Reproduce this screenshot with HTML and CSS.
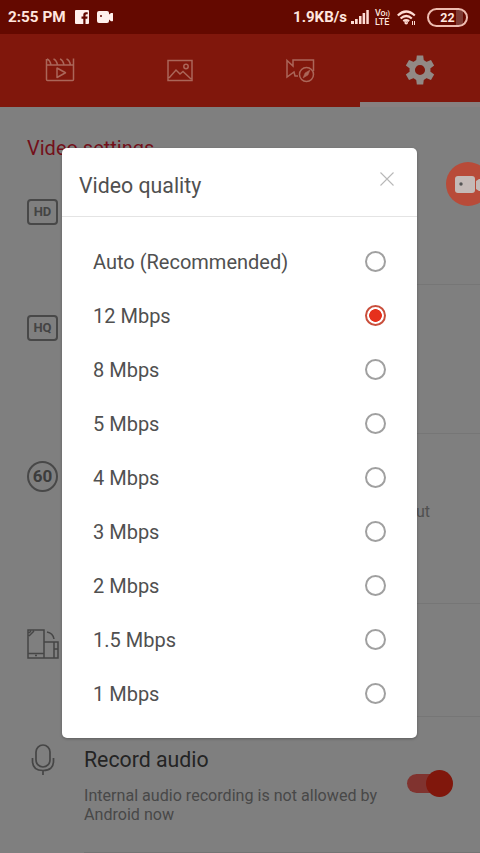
FILE: index.html
```html
<!DOCTYPE html>
<html lang="en">
<head>
<meta charset="utf-8">
<title>Video settings</title>
<link rel="stylesheet" href="styles.css">
</head>
<body>
<div class="screen">
  <header class="status">
    <span class="clock">2:55 PM</span>
    <svg class="fb" width="14" height="14" viewBox="0 0 14 14"><path fill="#fff0ec" fill-rule="evenodd" d="M1 0h12a1 1 0 0 1 1 1v12a1 1 0 0 1-1 1h-2.500V8.700h1.800l.3-2.100h-2.100V5.200q0-1 1.100-1h1.100V2.300h-1.800Q8.300 2.300 8.300 4.800v1.800H6.500v2.100h1.800V14H1a1 1 0 0 1-1-1V1a1 1 0 0 1 1-1z"/></svg>
    <svg class="cam" width="17" height="12" viewBox="0 0 17 12"><rect width="12" height="12" rx="2" fill="#fff0ec"/><path fill="#fff0ec" d="M12 3.500l2-1.500h1.500q.5 0 .5.600v7q0 .600-.5.600H14L12 8.500z"/><circle cx="4" cy="5" r="1" fill="#640900"/></svg>
    <span class="speed">1.9KB/s</span>
    <svg class="signal" width="18" height="14" viewBox="0 0 18 14" fill="#ffdcd4"><path d="M0 11h3v3H0zM4 9h2.700v5H4zM8 6h2.500v8H8zM11.600 3h2.500v11h-2.500zM15.300 0h2.500v14h-2.500z"/></svg>
    <span class="volte"><span>Vo<small>ı)</small></span><span>LTE</span></span>
    <svg class="wifi" width="19" height="15" viewBox="0 0 19 15" fill="none" stroke="#ffdcd4" stroke-width="2.200"><path d="M.8 5.500Q9 -2.500 17.800 5.500M3.600 8.500q5.600-5 11.200 0M6.300 11.200q2.900-2.300 5.800 0"/><circle cx="9.200" cy="12.700" r=".7"/><path stroke-width="1" d="M15.500 11v4M17.500 11v4"/></svg>
    <span class="battery"><b>22</b></span>
  </header>
  <nav class="tabs">
    <div class="tab"><svg width="30" height="26" viewBox="0 0 30 26" fill="none" stroke="#ab6659" stroke-width="1.500"><path d="M1.500 2v20.500q0 1 1 1h25q1 0 1-1V1.500M1.500 8h27M2 2q3 1 4 6M8.500 2q3 1 4 6M15 2q3 1 4 6M21.500 2q3 1 4 6"/><path stroke-linejoin="round" d="M12 11v9.500l8.500-4.750z"/></svg></div>
    <div class="tab"><svg width="26" height="23" viewBox="0 0 26 23" fill="none" stroke="#ab6659" stroke-width="1.500"><path d="M1 1.500h24v20H1zM2 19l7-8 4 4 3-2.500L24 20"/><circle cx="19" cy="7.500" r="2.200"/></svg></div>
    <div class="tab"><svg width="30" height="25" viewBox="0 0 30 25" fill="none" stroke="#ab6659" stroke-width="1.500"><path d="M13 18h-3l-1-4-7 5V2.500L8 8V2h20.500v11"/><circle cx="21.500" cy="16.500" r="7"/><path d="M18 20l2-5 5-3-2 5z" fill="#ab6659" stroke-width=".5"/></svg></div>
    <div class="tab active"><svg width="30" height="30" viewBox="0 0 30 30"><g transform="translate(15 15)"><g fill="#928985"><path id="t" d="M-4-8l.8-6.500h6.400L4-8z"/><use href="#t" transform="rotate(60)"/><use href="#t" transform="rotate(120)"/><use href="#t" transform="rotate(180)"/><use href="#t" transform="rotate(240)"/><use href="#t" transform="rotate(300)"/></g><circle r="7.800" fill="none" stroke="#928985" stroke-width="5.500"/></g></svg></div>
  </nav>
  <main class="settings">
    <h2>Video settings</h2>
    <section class="row r1"><span class="badge">HD</span></section>
    <section class="row r2"><span class="badge">HQ</span></section>
    <section class="row r3"><span class="badge fps">60</span><span class="hint">ut</span></section>
    <section class="row r4"><svg class="rotate" width="32" height="30" viewBox="0 0 32 30" fill="none" stroke="#464646" stroke-width="1.500"><path d="M1 1h16v28H1zM1 24.500h16M2 7l5-5M2 4l2-2M17 13h14v16H17M27 13v16M27 20h4M8 26.500h2M20 3q6 1 7 7"/></svg></section>
    <section class="row audio">
      <svg class="mic" width="24" height="32" viewBox="0 0 24 32" fill="none" stroke="#464646" stroke-width="1.700"><rect x="5" y="1" width="14" height="22" rx="7"/><path d="M1.500 14v3q0 9.500 10.500 9.500T22.500 17v-3M12 26.500V31"/></svg>
      <div class="copy"><h3>Record audio</h3><p>Internal audio recording is not allowed by Android now</p></div>
      <span class="switch"></span>
    </section>
    <hr>
  </main>
  <div class="floating"><svg width="32" height="18" viewBox="0 0 32 18"><rect x="0" y="0" width="20" height="17" rx="3" fill="#c4bab7"/><path d="M21 5l3-2h8v12h-8l-3-2z" fill="#c4bab7"/><circle cx="6" cy="8" r="1.700" fill="#555"/></svg></div>
  <div class="dialog">
    <div class="head"><h1>Video quality</h1><svg width="14" height="14" viewBox="0 0 14 14" stroke="#b8b8b8" stroke-width="1.100"><path d="M.5.500l13 13M13.500.500l-13 13"/></svg></div>
    <ul>
      <li>Auto (Recommended)<i></i></li>
      <li>12 Mbps<i class="on"></i></li>
      <li>8 Mbps<i></i></li>
      <li>5 Mbps<i></i></li>
      <li>4 Mbps<i></i></li>
      <li>3 Mbps<i></i></li>
      <li>2 Mbps<i></i></li>
      <li>1.5 Mbps<i></i></li>
      <li>1 Mbps<i></i></li>
    </ul>
  </div>
</div>
</body>
</html>
```
FILE: styles.css
```css
* { box-sizing: border-box; margin: 0; padding: 0; }
body { background: #7f7f7f; font-family: Roboto, "Liberation Sans", sans-serif; }
svg { display: block; flex: none; }
.screen { position: relative; width: 480px; height: 853px; overflow: hidden; }
.status { height: 34px; background: #640900; color: #ffe6df; display: flex; align-items: center; padding: 0 12px 0 8px; font-weight: 700; font-size: 15px; white-space: nowrap; }
.clock { width: 67px; font-size: 15.300px; }
.cam { margin-left: 8px; }
.speed { margin-left: auto; }
.signal { margin: 0 6px 0 4px; }
.volte { display: flex; flex-direction: column; width: 17px; font-size: 9px; line-height: 8px; font-weight: 500; }
.volte small { font-size: 7px; }
.wifi { margin: 0 11px 0 5px; }
.battery { width: 41px; height: 19px; border: 2px solid #eebcb0; border-radius: 10px; font-size: 12.500px; line-height: 15px; text-align: center; background: linear-gradient(90deg, transparent 27px, #7d3c35 27px 34px, transparent 34px); }
.battery b { font-weight: 700; }
.tabs { height: 73px; background: #80170c; display: grid; grid-template-columns: repeat(4, 1fr); }
.tab { display: flex; justify-content: center; align-items: center; border-bottom: 1px solid #80170c; }
.tab.active { border-bottom: 5px solid #878080; padding-top: 3px; }
.settings { padding-left: 27px; }
h2 { height: 66px; padding-top: 29px; font-size: 20px; line-height: 24px; font-weight: 400; color: #73101a; }
.row { display: flex; align-items: flex-start; background: linear-gradient(#767676, #767676) 57px 100% / 100% 1px no-repeat; }
.r1 { height: 112px; padding-top: 26px; }
.r2 { height: 149px; padding-top: 30px; }
.r3 { height: 170px; padding-top: 27px; }
.r4 { height: 113px; padding-top: 25px; }
.badge { width: 31px; height: 26px; border: 2px solid #484848; border-radius: 4px; color: #444; font-size: 13px; font-weight: 700; line-height: 22px; text-align: center; }
.fps { height: 31px; border-radius: 50%; font-size: 17px; line-height: 27px; color: #3c3c3c; }
.hint { margin: 41px 0 0 358px; font-size: 16px; line-height: 20px; color: #505050; }
.audio { height: 135px; padding-top: 27px; background: none; }
.mic { margin-left: 4px; }
.copy { width: 304px; margin-left: 29px; }
h3 { font-size: 21.300px; line-height: 24px; font-weight: 400; color: #242424; padding-top: 4px; height: 43px; }
.copy p { font-size: 16.100px; line-height: 18.500px; color: #484848; }
.switch { position: relative; width: 46px; height: 19px; margin: 30px 0 0 19px; background: linear-gradient(90deg, #80332f 65%, transparent 65%); border-radius: 10px; }
.switch::after { content: ""; position: absolute; right: 0; top: -4px; width: 27px; height: 27px; border-radius: 50%; background: #80170c; }
hr { border: 0; height: 1px; margin-left: 57px; background: #747474; }
.floating { position: absolute; left: 446px; top: 162px; width: 44px; height: 44px; border-radius: 50%; background: #b84b39; padding: 14px 0 0 9px; }
.dialog { position: absolute; left: 62px; top: 148px; width: 355px; height: 590px; background: #fff; border-radius: 5px; box-shadow: 0 1px 3px #0004; color: #505050; }
.head { height: 69px; border-bottom: 1px solid #e4e4e4; padding: 24px 23px 0 17px; display: flex; justify-content: space-between; }
h1 { font-size: 21.300px; line-height: 28px; font-weight: 400; }
ul { list-style: none; padding: 18px 31px 0; }
li { display: flex; justify-content: space-between; align-items: center; height: 54px; font-size: 20px; }
li i { width: 21px; height: 21px; margin-top: -1px; border: 2px solid #a0a0a0; border-radius: 50%; }
li i.on { border: 2px solid #c94f3c; background: radial-gradient(circle, #e6301c 0 6px, #fff 6.700px); }
```
